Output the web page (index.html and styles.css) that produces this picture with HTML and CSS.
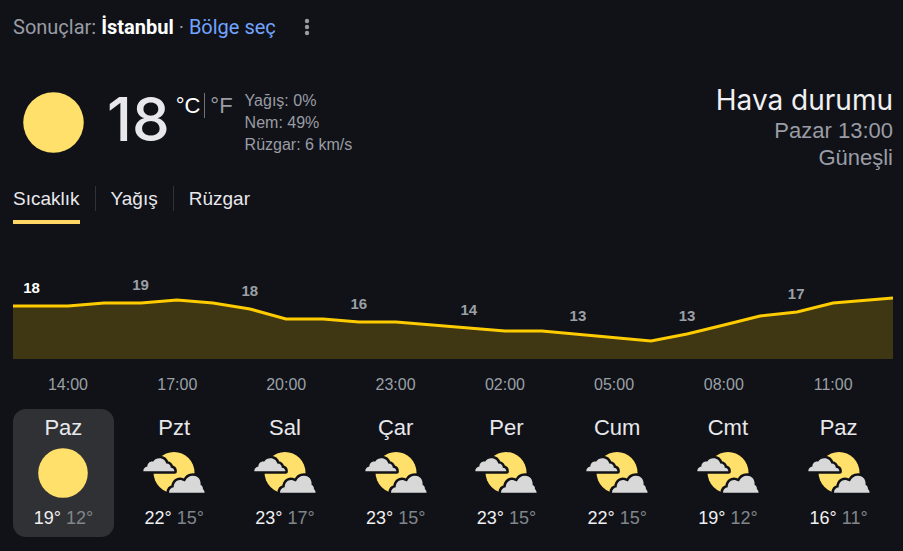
FILE: index.html
```html
<!DOCTYPE html>
<html lang="tr">
<head>
<meta charset="utf-8">
<meta name="viewport" content="width=device-width, initial-scale=1">
<title>Hava durumu</title>
<link rel="stylesheet" href="styles.css">
</head>
<body>
<svg class="defs" aria-hidden="true">
  <defs>
    <symbol id="sun" viewBox="0 0 50 50"><circle cx="25" cy="25" r="24.800" fill="#ffe06a"/></symbol>
    <symbol id="partly" viewBox="0 0 64 50">
      <circle cx="32" cy="24.500" r="20.500" fill="#ffe06a"/>
      <g fill="#d8d8d8" stroke="#101217" stroke-width="5" stroke-linejoin="round" paint-order="stroke">
        <path d="M1.300 23.200c0-2.800 1.800-4.400 4.100-4.700C5.300 15.200 8 12.900 11.300 13.600C12.600 11 15 10.200 17.500 10.200c3.600 0 6 2.300 6.800 5.400c2.900.1 4.500 1.900 4.500 4.100c2.100.2 3.600 1.500 3.600 3.500z"/>
        <path d="M27 44.800c0-3.300 2-5.100 4.700-5.500c0-5.400 4.300-8.300 8.400-6.900c1.300.2 2 .7 2.800 1.200C44.500 29.700 47.500 27.700 51 27.700c5.600 0 8 4.500 7.600 9.300c2.200 1 2.400 2.600 2.300 4.300c1.100.7 1.700 1.900 1.700 3.500z"/>
      </g>
    </symbol>
  </defs>
</svg>
<main class="weather">
  <header class="place">
    <p>Sonuçlar: <strong>İstanbul</strong> · <a href="#">Bölge seç</a></p>
    <button class="more" type="button" aria-label="Diğer seçenekler">
      <svg viewBox="0 0 6 18" aria-hidden="true"><circle cx="3" cy="3" r="2.200"/><circle cx="3" cy="9" r="2.200"/><circle cx="3" cy="15" r="2.200"/></svg>
    </button>
  </header>
  <section class="current">
    <svg class="sun" aria-hidden="true"><use href="#sun"/></svg>
    <span class="temp">18</span>
    <div class="units"><button type="button" class="on">°C</button><button type="button">°F</button></div>
    <ul class="details"><li>Yağış: 0%</li><li>Nem: 49%</li><li>Rüzgar: 6 km/s</li></ul>
    <div class="summary"><h1>Hava durumu</h1><p>Pazar 13:00</p><p>Güneşli</p></div>
  </section>
  <nav class="tabs">
    <button type="button" class="on">Sıcaklık</button>
    <button type="button">Yağış</button>
    <button type="button">Rüzgar</button>
  </nav>
  <svg class="chart" role="img" aria-label="Saatlik sıcaklık">
    <svg width="100%" height="90" viewBox="0 0 880 90" preserveAspectRatio="none">
      <path class="area" d="M0 37H55L91 34H128L164 31L200 34L237 40L273 50H310L346 53H383L492 62H529L638 72L674 65L711 56L747 47L784 43L820 34L880 29V90H0Z"/>
      <path class="line" d="M0 37H55L91 34H128L164 31L200 34L237 40L273 50H310L346 53H383L492 62H529L638 72L674 65L711 56L747 47L784 43L820 34L880 29"/>
    </svg>
    <g class="values">
      <text class="on" x="2.100%" y="24">18</text><text x="14.500%" y="21">19</text><text x="26.900%" y="27">18</text><text x="39.300%" y="40">16</text><text x="51.800%" y="46">14</text><text x="64.200%" y="52">13</text><text x="76.600%" y="52">13</text><text x="89%" y="30">17</text>
    </g>
    <g class="hours">
      <text x="6.250%" y="121">14:00</text><text x="18.670%" y="121">17:00</text><text x="31.050%" y="121">20:00</text><text x="43.470%" y="121">23:00</text><text x="55.900%" y="121">02:00</text><text x="68.300%" y="121">05:00</text><text x="80.770%" y="121">08:00</text><text x="93.200%" y="121">11:00</text>
    </g>
  </svg>
  <ol class="days">
    <li class="on"><span>Paz</span><svg><use href="#sun"/></svg><p><b>19°</b> 12°</p></li>
    <li><span>Pzt</span><svg><use href="#partly"/></svg><p><b>22°</b> 15°</p></li>
    <li><span>Sal</span><svg><use href="#partly"/></svg><p><b>23°</b> 17°</p></li>
    <li><span>Çar</span><svg><use href="#partly"/></svg><p><b>23°</b> 15°</p></li>
    <li><span>Per</span><svg><use href="#partly"/></svg><p><b>23°</b> 15°</p></li>
    <li><span>Cum</span><svg><use href="#partly"/></svg><p><b>22°</b> 15°</p></li>
    <li><span>Cmt</span><svg><use href="#partly"/></svg><p><b>19°</b> 12°</p></li>
    <li><span>Paz</span><svg><use href="#partly"/></svg><p><b>16°</b> 11°</p></li>
  </ol>
</main>
</body>
</html>
```
FILE: styles.css
```css
* { box-sizing: border-box; margin: 0; padding: 0; }
body { background: #101217; color: #e8e8ec; font-family: "Liberation Sans", Arial, sans-serif; }
button { background: none; border: 0; color: inherit; font: inherit; cursor: pointer; }
ul, ol { list-style: none; }
.defs { position: absolute; width: 0; height: 0; }
.weather { padding: 14px 10px 14px 13px; }
.place { display: flex; align-items: center; gap: 28px; height: 26px; font-family: Roboto, sans-serif; font-size: 20px; color: #9a9ca5; }
.place strong { color: #fff; }
.place a { color: #72a4ff; text-decoration: none; }
.more { display: flex; }
.more svg { width: 6px; height: 18px; fill: #9a9ca5; }
.current { display: flex; align-items: flex-start; margin-top: 44px; padding-left: 10px; height: 91px; }
.sun { width: 61px; height: 61px; margin-top: 8px; flex: none; }
.temp { margin-left: 23px; font-family: Inter, sans-serif; font-size: 60px; font-weight: 500; line-height: 70px; }
.units { display: flex; margin: 9px 0 0 6px; font-size: 22px; line-height: 25px; color: #9a9ca5; }
.units .on { color: #fff; padding-right: 4px; border-right: 1px solid #70727a; margin-right: 5px; }
.details { margin: 6px 0 0 12px; font-size: 16px; line-height: 22px; color: #9a9ca5; }
.summary { margin-left: auto; text-align: right; font-size: 22px; line-height: 27px; color: #9a9ca5; }
.summary h1 { font: 400 28px/33px Inter, sans-serif; color: #f0f0f3; }
.tabs { display: flex; margin-top: 12px; font-size: 19px; }
.tabs button { position: relative; display: flex; padding-bottom: 13px; margin-right: 31px; line-height: 24px; }
.tabs button.on { box-shadow: inset 0 -4px #fdd663; }
.tabs button + button::before { content: ""; position: absolute; left: -16px; top: -1px; height: 25px; width: 1px; background: #303238; }
.chart { display: block; width: 100%; height: 130px; margin-top: 45px; }
.area { fill: #3f3614; }
.line { fill: none; stroke: #fc0; stroke-width: 3px; vector-effect: non-scaling-stroke; }
.chart text { text-anchor: middle; fill: #9aa0a6; font-size: 16px; }
.chart .values text { font-size: 15px; font-weight: bold; }
.chart .values .on { fill: #fff; }
.days { display: grid; grid-template-columns: repeat(8, minmax(0, 1fr)); gap: 10px; margin: 10px 4px 0 0; }
.days li { height: 128px; padding-top: 6px; border-radius: 13px; text-align: center; font-size: 22px; line-height: 26px; }
.days li.on { background: #303134; }
.days svg { display: block; width: 64px; height: 50px; margin: 7px auto 0; }
.days p { margin-top: 8px; font-size: 18px; line-height: 24px; color: #80868b; }
.days b { font-weight: normal; color: #f0f0f3; }
```
